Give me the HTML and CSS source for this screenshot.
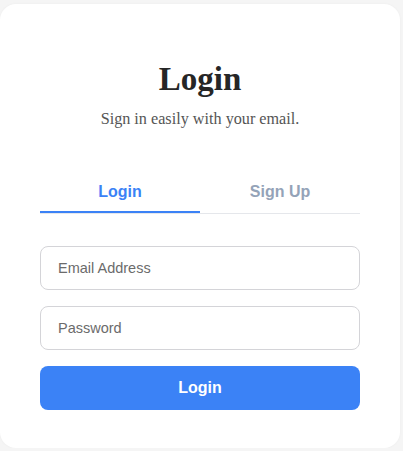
FILE: index.html
```html
<!DOCTYPE html>
<html lang="en">
<head>
<meta charset="utf-8">
<title>Login</title>
<link rel="stylesheet" href="styles.css">
</head>
<body>
<div class="card">
  <h1 class="title">Login</h1>
  <p class="subtitle">Sign in easily with your email.</p>
  <div class="tabs">
    <button class="tab active" type="button">Login</button>
    <button class="tab" type="button">Sign Up</button>
  </div>
  <form class="form">
    <input class="field" type="email" placeholder="Email Address">
    <input class="field" type="password" placeholder="Password">
    <button class="submit" type="button">Login</button>
  </form>
</div>
</body>
</html>
```
FILE: styles.css
```css
html, body {
  margin: 0;
  padding: 0;
  background: #f5f5f5;
}
body {
  padding-top: 4px;
}
.card {
  box-sizing: border-box;
  width: 400px;
  background: #ffffff;
  border-radius: 16px;
  padding: 40px 40px 38px;
  box-shadow: 0 0 3px rgba(0, 0, 0, 0.04);
  display: flex;
  flex-direction: column;
}
.title {
  margin: 15px 0 0;
  font-family: "Liberation Serif", serif;
  font-weight: bold;
  font-size: 33px;
  line-height: 40px;
  color: #262626;
  text-align: center;
}
.subtitle {
  margin: 9px 0 0;
  font-family: "Liberation Serif", serif;
  font-size: 16.2px;
  line-height: 22px;
  color: #555555;
  text-align: center;
}
.tabs {
  margin-top: 42px;
  display: flex;
  border-bottom: 1px solid #e5e7eb;
}
.tab {
  flex: 1;
  background: none;
  border: none;
  border-bottom: 2px solid transparent;
  padding: 10px 0 9px;
  margin: 0;
  font-family: "Liberation Sans", Arial, sans-serif;
  font-weight: bold;
  font-size: 16px;
  line-height: 20px;
  color: #94a3b8;
  cursor: pointer;
}
.tab.active {
  color: #3b82f6;
  border-bottom-color: #3b82f6;
}
.form {
  margin-top: 32px;
  display: flex;
  flex-direction: column;
  gap: 16px;
}
.field {
  box-sizing: border-box;
  height: 44px;
  width: 100%;
  padding: 0 17px;
  border: 1px solid #d4d4d8;
  border-radius: 8px;
  font-family: "Liberation Sans", Arial, sans-serif;
  font-size: 14.5px;
  color: #333333;
  background: #ffffff;
  outline: none;
}
.field::placeholder {
  color: #6b6b6b;
}
.submit {
  height: 44px;
  width: 100%;
  border: none;
  border-radius: 8px;
  background: #3b82f6;
  color: #ffffff;
  font-family: "Liberation Sans", Arial, sans-serif;
  font-weight: bold;
  font-size: 16px;
  cursor: pointer;
}
```
